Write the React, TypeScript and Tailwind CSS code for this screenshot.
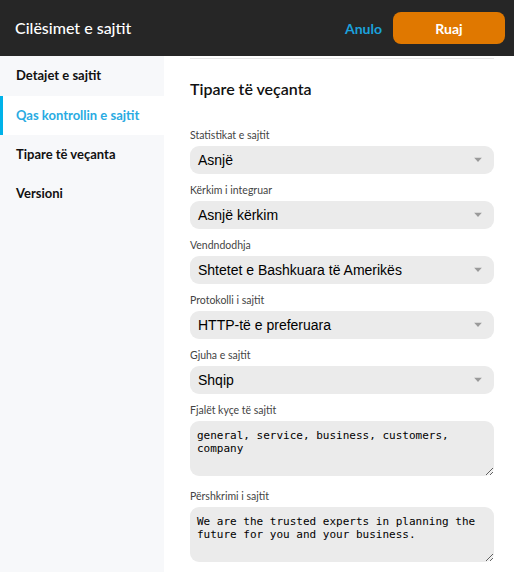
import React from "react";

const lato = { fontFamily: "Lato, 'Noto Sans', sans-serif" };

function Arrow() {
  return (
    <svg width="8" height="5" viewBox="0 0 8 5" className="absolute right-[12px] top-1/2 -translate-y-1/2">
      <path d="M0 0 L8 0 L4 4.5 Z" fill="#9a9a9a" />
    </svg>
  );
}

function SelectField({ label, value }: { label: string; value: string }) {
  return (
    <div className="mb-[9px]">
      <div className="text-[10.5px] leading-[14px] text-[#444] mb-[4px] font-[Lato,sans-serif]">{label}</div>
      <div className="relative h-[28px] rounded-[9px] bg-[#ebebeb] flex items-center pl-[8px] text-[14px] text-black font-['Liberation_Sans',Arial,sans-serif]">
        {value}
        <Arrow />
      </div>
    </div>
  );
}

function AreaField({ label, value, mb }: { label: string; value: string; mb: string }) {
  return (
    <div className={mb}>
      <div className="text-[10.5px] leading-[14px] text-[#444] mb-[4px] font-[Lato,sans-serif]">{label}</div>
      <textarea
        readOnly
        value={value}
        className="block w-full h-[55px] rounded-[9px] bg-[#ebebeb] px-[7px] pt-[8px] pb-[7px] text-[11px] leading-[13px] text-black font-['DejaVu_Sans_Mono',monospace] outline-none"
      />
    </div>
  );
}

export default function App() {
  return (
    <div className="w-[514px] h-[572px] overflow-hidden flex flex-col bg-white" style={lato}>
      <header className="h-[56px] shrink-0 bg-[#262626] flex items-center pl-[15px] pr-[9px]">
        <div className="text-white text-[16px] font-medium">Cilësimet e sajtit</div>
        <div className="ml-auto flex items-center">
          <span className="text-[#1ba1dc] text-[14px] font-bold mr-[11px]">Anulo</span>
          <button className="w-[112px] h-[32px] rounded-[8px] bg-[#e07800] text-white text-[14px] font-bold">Ruaj</button>
        </div>
      </header>
      <div className="flex flex-1 min-h-0">
        <nav className="w-[164px] shrink-0 bg-[#f7f8fa]">
          <div className="h-[40px] flex items-center pl-[16px] text-[13px] font-bold text-[#111]">Detajet e sajtit</div>
          <div className="h-[39px] flex items-center pl-[13px] text-[13px] font-bold text-[#29abe2] bg-white border-l-[3px] border-[#00b2e9]">
            Qas kontrollin e sajtit
          </div>
          <div className="h-[39px] flex items-center pl-[16px] text-[13px] font-bold text-[#111]">Tipare të veçanta</div>
          <div className="h-[39px] flex items-center pl-[16px] text-[13px] font-bold text-[#111]">Versioni</div>
        </nav>
        <main className="flex-1 pl-[26px] pr-[20px] pt-[2px]">
          <div className="border-t border-[#e6e6e6]" />
          <h2 className="mt-[20px] mb-[29px] text-[16px] leading-[20px] font-semibold text-[#111]">Tipare të veçanta</h2>
          <SelectField label="Statistikat e sajtit" value="Asnjë" />
          <SelectField label="Kërkim i integruar" value="Asnjë kërkim" />
          <SelectField label="Vendndodhja" value="Shtetet e Bashkuara të Amerikës" />
          <SelectField label="Protokolli i sajtit" value="HTTP-të e preferuara" />
          <SelectField label="Gjuha e sajtit" value="Shqip" />
          <AreaField label="Fjalët kyçe të sajtit" value="general, service, business, customers, company" mb="mb-[13px]" />
          <AreaField label="Përshkrimi i sajtit" value="We are the trusted experts in planning the future for you and your business." mb="mb-[13px]" />
        </main>
      </div>
    </div>
  );
}
